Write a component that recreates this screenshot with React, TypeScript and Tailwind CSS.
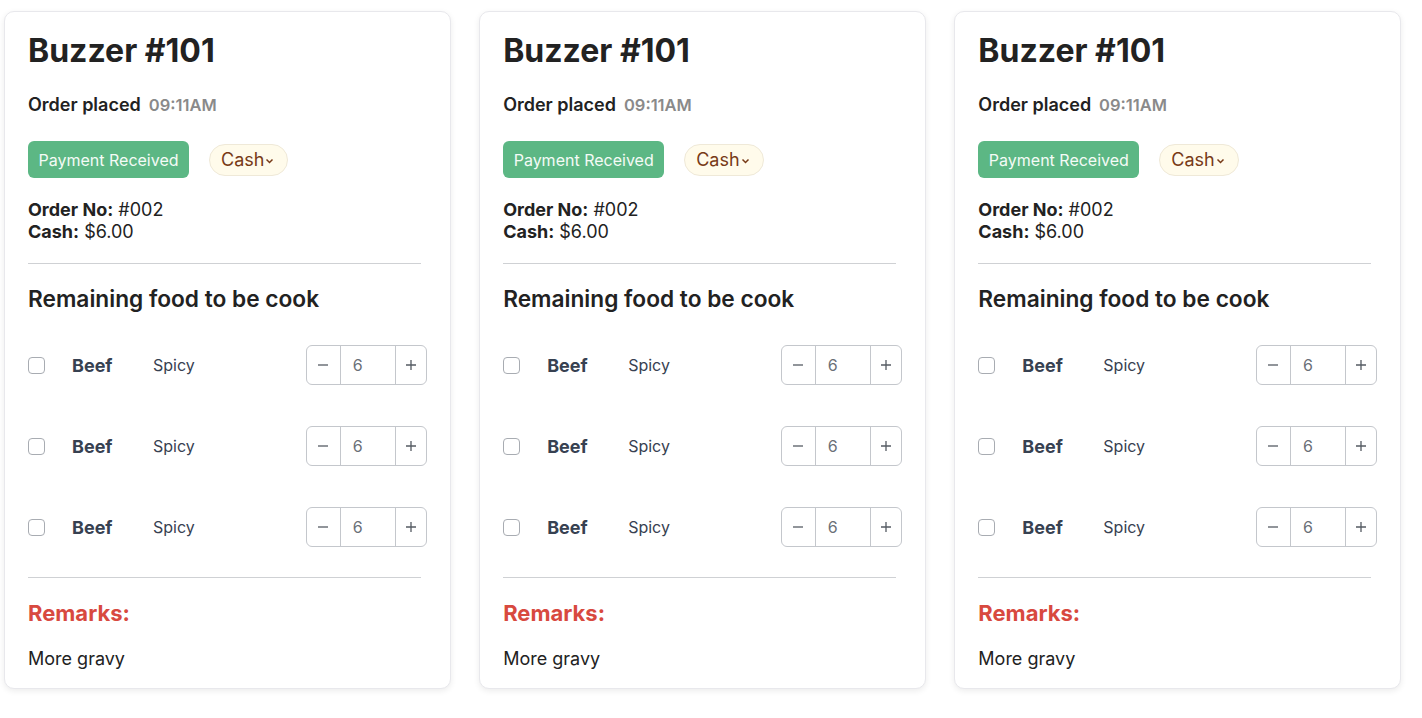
import React from "react";

function Stepper() {
  return (
    <div className="flex h-10 w-[121px] items-stretch rounded-md border border-[#c4c7cc] text-[16px]">
      <button className="flex w-[33px] items-center justify-center text-[#555b63]">
        <svg width="12" height="12" viewBox="0 0 12 12"><path d="M1 6h10" stroke="currentColor" strokeWidth="1.3" /></svg>
      </button>
      <div className="flex w-[56px] items-center border-x border-[#c4c7cc] pl-[12px] text-[#6b7078]">6</div>
      <button className="flex flex-1 items-center justify-center text-[#555b63]">
        <svg width="12" height="12" viewBox="0 0 12 12"><path d="M1 6h10M6 1v10" stroke="currentColor" strokeWidth="1.3" /></svg>
      </button>
    </div>
  );
}

function Row() {
  return (
    <div className="flex h-10 items-center">
      <div className="h-[17px] w-[17px] rounded-[4px] border border-[#a8acb2] bg-white" />
      <div className="ml-[27px] w-[81px] text-[18px] font-bold text-[#374151]">Beef</div>
      <div className="text-[16px] text-[#374151]">Spicy</div>
      <div className="ml-auto">
        <Stepper />
      </div>
    </div>
  );
}

function Card() {
  return (
    <div className="flex flex-col rounded-[10px] border border-[#e8e8ec] bg-white px-[23px] pb-[15px] pt-[21px] shadow-[0_2px_6px_rgba(0,0,0,0.08)]">
      <div className="text-[32px] font-bold leading-9 text-[#222]">Buzzer #101</div>
      <div className="mt-[22px] flex items-baseline leading-7">
        <span className="text-[18px] font-semibold text-[#222]">Order placed</span>
        <span className="ml-2 text-[16.5px] font-semibold text-[#8a8a8a]">09:11AM</span>
      </div>
      <div className="mt-[22px] flex items-center">
        <div className="flex h-[37px] items-center rounded-[6px] bg-[#5cb784] px-[10.5px] text-[16px] text-[#f4fbf6]">Payment Received</div>
        <div className="ml-[20px] flex h-[32px] items-center rounded-full border border-[#efe9d8] bg-[#fffbeb] pl-[11px] pr-[13px] text-[18px] text-[#773a17]">
          Cash
          <svg width="9" height="6" viewBox="0 0 9 6" className="ml-[1px] mt-[2px]"><path d="M1.5 1.5l3 3 3-3" fill="none" stroke="currentColor" strokeWidth="1.5" /></svg>
        </div>
      </div>
      <div className="mt-[21px] text-[18px] leading-[22px] text-[#222]">
        <div><span className="font-bold">Order No:</span> #002</div>
        <div><span className="font-bold">Cash:</span> $6.00</div>
      </div>
      <div className="mr-[6px] mt-[20px] h-px bg-[#cfd1d4]" />
      <div className="mt-[21px] text-[22.7px] font-semibold leading-7 text-[#222]">Remaining food to be cook</div>
      <div className="mt-[32px] flex flex-col gap-[41px]">
        <Row />
        <Row />
        <Row />
      </div>
      <div className="mr-[6px] mt-[30px] h-px bg-[#cfd1d4]" />
      <div className="mt-[21px] text-[22px] font-bold leading-7 text-[#d8493f]">Remarks:</div>
      <div className="mt-[18px] text-[18px] leading-7 text-[#222]">More gravy</div>
    </div>
  );
}

export default function App() {
  return (
    <div className="min-h-[718px] bg-white font-['Inter',sans-serif]">
      <div className="grid grid-cols-3 gap-x-[28.5px] pl-1 pr-[21px] pt-[11px]">
        <Card />
        <Card />
        <Card />
      </div>
    </div>
  );
}
